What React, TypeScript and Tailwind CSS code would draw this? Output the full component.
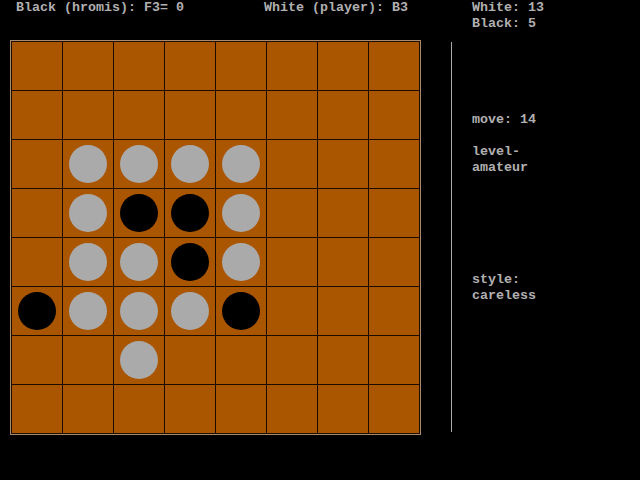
const board: string[] = [
  "........",
  "........",
  ".WWWW...",
  ".WBBW...",
  ".WWBW...",
  "BWWWB...",
  "..W.....",
  "........",
];

function Cell({ v }: { v: string }) {
  return (
    <div className="flex items-center justify-center bg-[#aa5500]">
      {v === "W" && <div className="w-[38px] h-[38px] rounded-full bg-[#aaaaaa]" />}
      {v === "B" && <div className="w-[38px] h-[38px] rounded-full bg-black" />}
    </div>
  );
}

export default function App() {
  return (
    <div
      className="w-[640px] h-[480px] bg-black text-[#b0b0b0] font-bold flex overflow-hidden text-[13.33px] leading-[16px]"
      style={{ fontFamily: '"Liberation Mono", "DejaVu Sans Mono", monospace' }}
    >
      {/* linke Seite: Kopfzeile und Brett */}
      <div className="w-[472px] flex flex-col">
        <div className="h-[16px] flex whitespace-pre">
          <span className="ml-[16px] w-[248px]">Black (hromis): F3= 0</span>
          <span>White (player): B3</span>
        </div>
        <div className="flex mt-[24px] ml-[10px]">
          <div className="border border-[#a8896a]">
            <div className="border border-[#1e0e00]">
              <div className="grid grid-cols-[repeat(8,50px)] grid-rows-[repeat(8,48px)] gap-px bg-[#1c0c00]">
                {board.flatMap((row, r) =>
                  row.split("").map((v, c) => <Cell key={r + "-" + c} v={v} />)
                )}
              </div>
            </div>
          </div>
          <div className="ml-[30px] mt-[2px] w-px h-[390px] bg-[#aaaaaa]" />
        </div>
      </div>

      {/* rechte Spalte: Status */}
      <div className="flex flex-col whitespace-pre">
        <div>White: 13</div>
        <div>Black: 5</div>
        <div className="mt-[80px]">move: 14</div>
        <div className="mt-[16px]">level-</div>
        <div>amateur</div>
        <div className="mt-[96px]">style:</div>
        <div>careless</div>
      </div>
    </div>
  );
}
